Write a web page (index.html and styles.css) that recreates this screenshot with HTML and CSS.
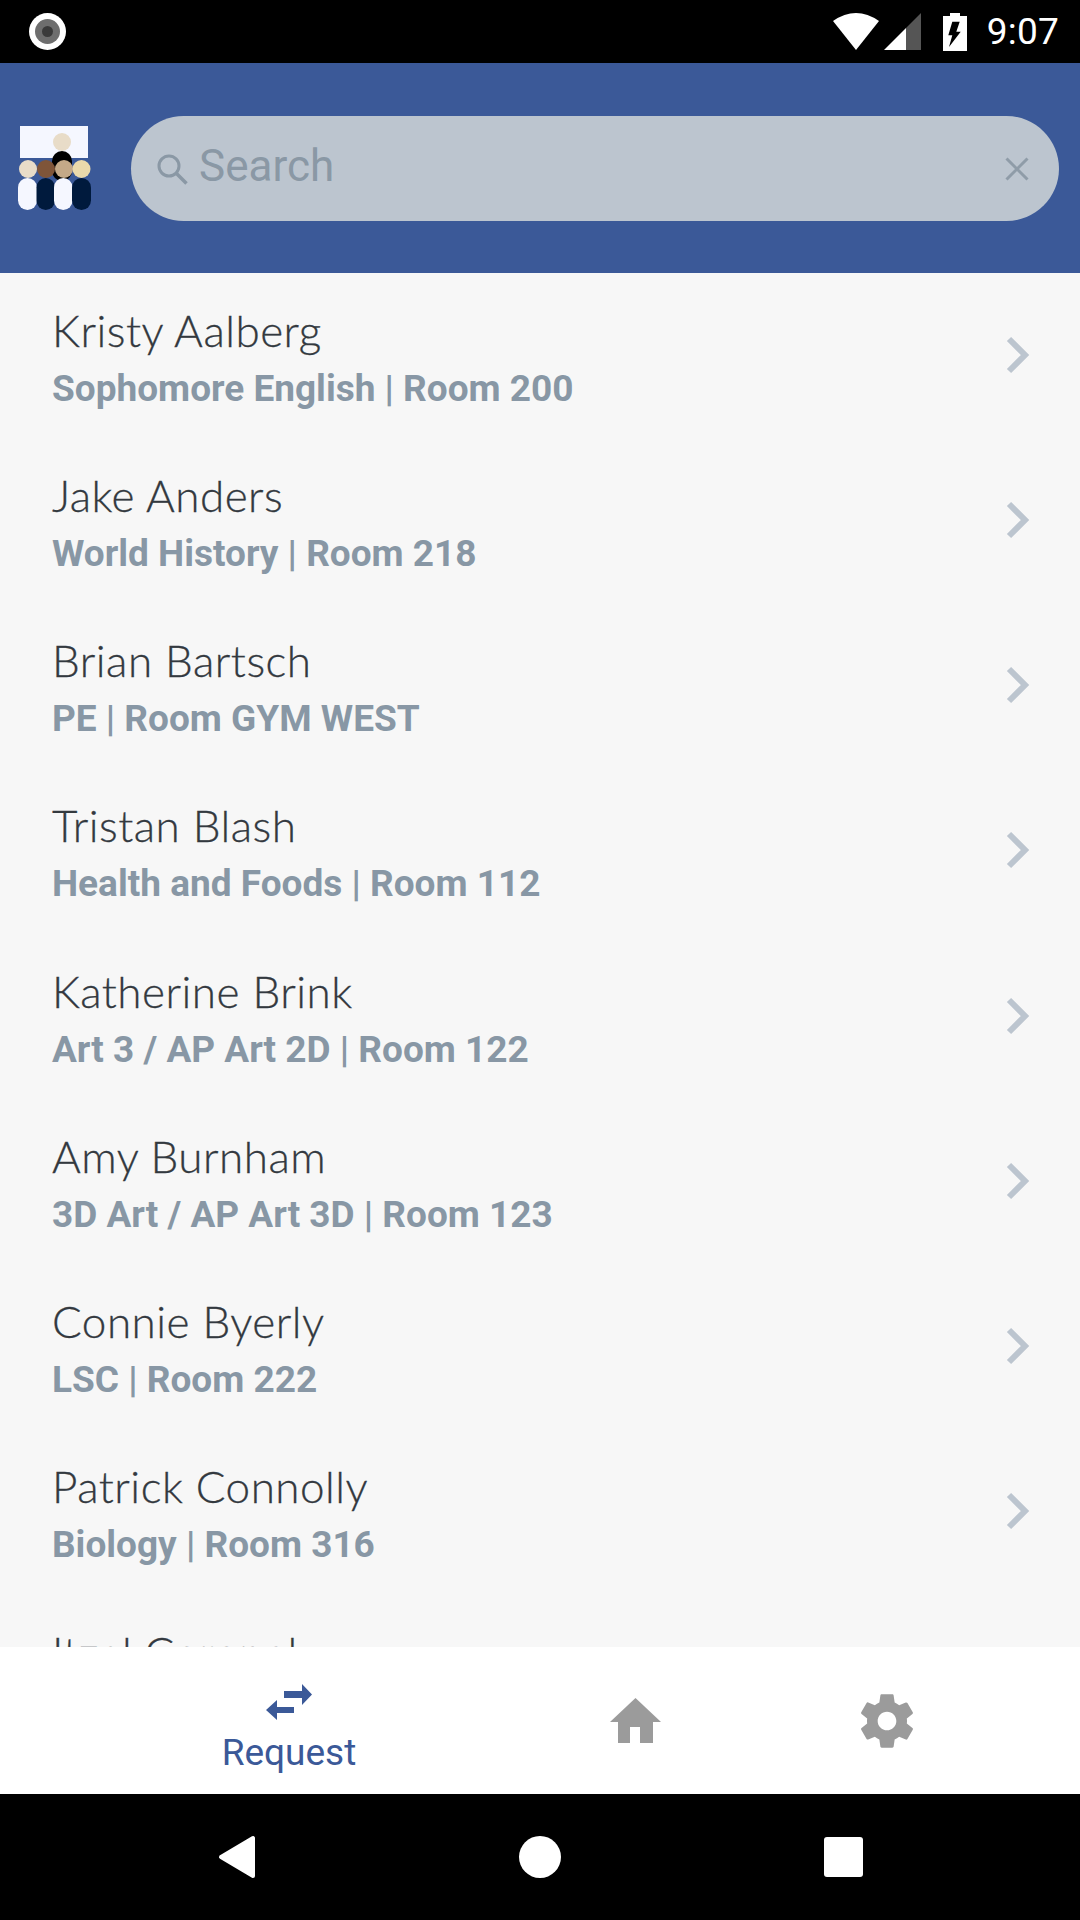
FILE: index.html
```html
<!DOCTYPE html>
<html lang="en">
<head>
<meta charset="utf-8">
<title>Teachers</title>
<link rel="stylesheet" href="styles.css">
</head>
<body>
<div class="app">
  <div class="status">
    <svg class="rec" width="37" height="37" viewBox="0 0 37 37"><circle cx="18.5" cy="18.5" r="18.5" fill="#fff"/><circle cx="18.5" cy="18.5" r="12.5" fill="#6e6e6e"/><circle cx="18.5" cy="18.5" r="5.5" fill="#3a3a3a"/></svg>
    <div class="status-right">
      <svg width="46" height="37" viewBox="0 0 46 37"><path d="M23 37L0 8Q23-8 46 8Z" fill="#fff"/></svg>
      <svg class="sig" width="37" height="37" viewBox="0 0 37 37"><polygon points="0,37 22,15 22,37" fill="#fff"/><polygon points="22,15 37,0 37,37 22,37" fill="#555"/></svg>
      <svg class="bat" width="24" height="38" viewBox="0 0 24 38"><path d="M0 3H7V0H17V3H24V38H0Z" fill="#fff"/><polygon points="9.3,8.7 16.7,8.7 13.3,18.7 17.7,18.7 6,34 9.3,22.3 5.3,22.3" fill="#000"/></svg>
      <span class="time">9:07</span>
    </div>
  </div>
  <header class="top">
    <svg class="logo" width="74" height="84" viewBox="18 126 74 84">
      <rect x="20" y="126" width="68" height="32" fill="#f5f7ff"/>
      <circle cx="62" cy="142" r="9" fill="#e8dcc8"/>
      <rect x="52" y="151" width="20" height="30" rx="10" fill="#000"/>
      <rect x="18" y="178" width="19" height="32" rx="9.5" fill="#f5f7ff"/>
      <rect x="36.500" y="178" width="18.500" height="32" rx="9.250" fill="#001a3d"/>
      <rect x="54" y="178" width="18.500" height="32" rx="9.250" fill="#f5f7ff"/>
      <rect x="72" y="178" width="19" height="32" rx="9.500" fill="#001a3d"/>
      <circle cx="28" cy="169" r="9" fill="#e8dcc8"/>
      <circle cx="46" cy="169" r="9" fill="#7f5539"/>
      <circle cx="64" cy="169" r="9" fill="#c4a988"/>
      <circle cx="81.500" cy="169" r="9" fill="#ead9ab"/>
    </svg>
    <div class="pill">
      <svg class="mag" width="31" height="31" viewBox="0 0 31 31"><circle cx="12" cy="12" r="10" fill="none" stroke="#8a98a5" stroke-width="3"/><path d="M19 19L29.500 29.500" stroke="#8a98a5" stroke-width="3.500" fill="none"/></svg>
      <span class="placeholder">Search</span>
      <svg class="clear" width="24" height="24" viewBox="0 0 24 24"><path d="M1.500 1.500L22.500 22.500M22.500 1.500L1.500 22.500" stroke="#8f9ca8" stroke-width="3" fill="none"/></svg>
    </div>
  </header>
  <main class="list">
    <div class="row"><div class="info"><div class="name">Kristy Aalberg</div><div class="sub">Sophomore English | Room 200</div></div><svg class="chev" width="24" height="38" viewBox="0 0 24 38"><path d="M3 3L19 19L3 35" fill="none" stroke="#bcc5cf" stroke-width="6"/></svg></div>
    <div class="row"><div class="info"><div class="name">Jake Anders</div><div class="sub">World History | Room 218</div></div><svg class="chev" width="24" height="38" viewBox="0 0 24 38"><path d="M3 3L19 19L3 35" fill="none" stroke="#bcc5cf" stroke-width="6"/></svg></div>
    <div class="row"><div class="info"><div class="name">Brian Bartsch</div><div class="sub">PE | Room GYM WEST</div></div><svg class="chev" width="24" height="38" viewBox="0 0 24 38"><path d="M3 3L19 19L3 35" fill="none" stroke="#bcc5cf" stroke-width="6"/></svg></div>
    <div class="row"><div class="info"><div class="name">Tristan Blash</div><div class="sub">Health and Foods | Room 112</div></div><svg class="chev" width="24" height="38" viewBox="0 0 24 38"><path d="M3 3L19 19L3 35" fill="none" stroke="#bcc5cf" stroke-width="6"/></svg></div>
    <div class="row"><div class="info"><div class="name">Katherine Brink</div><div class="sub">Art 3 / AP Art 2D | Room 122</div></div><svg class="chev" width="24" height="38" viewBox="0 0 24 38"><path d="M3 3L19 19L3 35" fill="none" stroke="#bcc5cf" stroke-width="6"/></svg></div>
    <div class="row"><div class="info"><div class="name">Amy Burnham</div><div class="sub">3D Art / AP Art 3D | Room 123</div></div><svg class="chev" width="24" height="38" viewBox="0 0 24 38"><path d="M3 3L19 19L3 35" fill="none" stroke="#bcc5cf" stroke-width="6"/></svg></div>
    <div class="row"><div class="info"><div class="name">Connie Byerly</div><div class="sub">LSC | Room 222</div></div><svg class="chev" width="24" height="38" viewBox="0 0 24 38"><path d="M3 3L19 19L3 35" fill="none" stroke="#bcc5cf" stroke-width="6"/></svg></div>
    <div class="row"><div class="info"><div class="name">Patrick Connolly</div><div class="sub">Biology | Room 316</div></div><svg class="chev" width="24" height="38" viewBox="0 0 24 38"><path d="M3 3L19 19L3 35" fill="none" stroke="#bcc5cf" stroke-width="6"/></svg></div>
    <div class="row"><div class="info"><div class="name">Itzel Coronel</div><div class="sub">Spanish | Room 210</div></div><svg class="chev" width="24" height="38" viewBox="0 0 24 38"><path d="M3 3L19 19L3 35" fill="none" stroke="#bcc5cf" stroke-width="6"/></svg></div>
  </main>
  <nav class="tabs">
    <div class="tab tab-active">
      <svg width="46" height="37" viewBox="0 0 46 37"><path d="M18 7H36V0L46 10.500L36 21V14H18ZM0 26L11 16V23H28V29H11V36Z" fill="#3b5998"/></svg>
      <span class="tab-label">Request</span>
    </div>
    <div class="tab">
      <svg width="51" height="45" viewBox="0 0 51 45"><polygon points="25.500,0 51,24 43,24 43,45 30,45 30,29 20,29 20,45 8,45 8,24 0,24" fill="#9b9b9b"/></svg>
    </div>
    <div class="tab tab-last">
      <svg width="64" height="64" viewBox="0 0 24 24"><path d="M19.430 12.980c.04-.32.07-.64.07-.98s-.03-.66-.07-.98l2.110-1.650c.19-.15.24-.42.12-.64l-2-3.460c-.12-.22-.39-.3-.61-.22l-2.490 1c-.52-.4-1.080-.73-1.690-.98l-.38-2.650C14.460 2.180 14.250 2 14 2h-4c-.25 0-.46.18-.49.42l-.38 2.650c-.61.25-1.170.59-1.690.98l-2.490-1c-.23-.09-.49 0-.61.22l-2 3.460c-.13.22-.07.49.12.64l2.110 1.650c-.04.32-.07.65-.07.98s.03.66.07.98l-2.110 1.650c-.19.15-.24.42-.12.64l2 3.460c.12.22.39.3.61.22l2.490-1c.52.4 1.080.73 1.690.98l.38 2.650c.03.24.24.42.49.42h4c.25 0 .46-.18.49-.42l.38-2.650c.61-.25 1.170-.59 1.690-.98l2.490 1c.23.09.49 0 .61-.22l2-3.460c.12-.22.07-.49-.12-.64l-2.110-1.650zM12 15.500c-1.930 0-3.500-1.570-3.500-3.500s1.570-3.500 3.500-3.500 3.500 1.570 3.500 3.500-1.570 3.500-3.500 3.500z" fill="#9b9b9b"/></svg>
    </div>
  </nav>
  <div class="sysnav">
    <svg width="38" height="44" viewBox="0 0 38 44"><path d="M3 22L35 3V41Z" fill="#fff" stroke="#fff" stroke-width="4" stroke-linejoin="round"/></svg>
    <svg width="42" height="42" viewBox="0 0 42 42"><circle cx="21" cy="21" r="21" fill="#fff"/></svg>
    <svg width="39" height="40" viewBox="0 0 39 40"><rect width="39" height="40" rx="3" fill="#fff"/></svg>
  </div>
</div>
</body>
</html>
```

FILE: styles.css
```css
* { box-sizing: border-box; }
html, body { margin: 0; padding: 0; }
body { font-family: "Roboto", "Liberation Sans", sans-serif; background: #000; }
svg { display: block; flex: none; }

.app { width: 1080px; height: 1920px; display: flex; flex-direction: column; overflow: hidden; }

.status { height: 63px; flex: none; background: #000; display: flex; align-items: center; justify-content: space-between; padding: 0 21px 0 29px; }
.status-right { display: flex; align-items: center; }
.sig { margin-left: 5px; }
.bat { margin-left: 22px; }
.time { margin-left: 20px; color: #fff; font-size: 37px; letter-spacing: 0.2px; font-weight: 400; line-height: 63px; }

.top { height: 210px; flex: none; background: #3b5998; display: flex; align-items: center; padding: 0 21px 0 18px; gap: 39px; }
.pill { flex: 1; height: 105px; border-radius: 53px; background: #bcc5cf; display: flex; align-items: center; padding: 0 30px 0 26px; }
.mag { margin-top: 2px; }
.placeholder { margin-left: 11px; margin-bottom: 5px; font-size: 44px; line-height: 52px; color: #8a98a5; }
.clear { margin-left: auto; margin-top: 2px; }

.list { flex: 1; min-height: 0; overflow: hidden; background: #f7f7f7; }
.row { height: 165.25px; display: flex; align-items: center; justify-content: space-between; padding: 0 50px 0 52px; }
.info { padding-top: 5px; }
.chev { margin-bottom: 2px; }
.name { font-family: "Lato", "Liberation Sans", sans-serif; font-weight: 300; font-size: 44px; letter-spacing: 0.5px; line-height: 54px; color: #33393f; -webkit-text-stroke: 0.3px #33393f; }
.sub { margin-top: 7px; font-family: "Roboto", "Liberation Sans", sans-serif; font-weight: 700; font-size: 37px; line-height: 50px; color: #8897a5; }

.tabs { height: 147px; flex: none; background: #fff; display: grid; grid-template-columns: 578px 114px 388px; }
.tab { display: flex; flex-direction: column; align-items: center; justify-content: center; }
.tab-active { padding-top: 19px; gap: 9px; }
.tab-last { padding-left: 2px; }
.tab-label { font-size: 37px; line-height: 46px; color: #3b5998; }

.sysnav { height: 126px; flex: none; background: #000; display: flex; align-items: center; padding: 0 217px 0 218px; justify-content: space-between; }
```
